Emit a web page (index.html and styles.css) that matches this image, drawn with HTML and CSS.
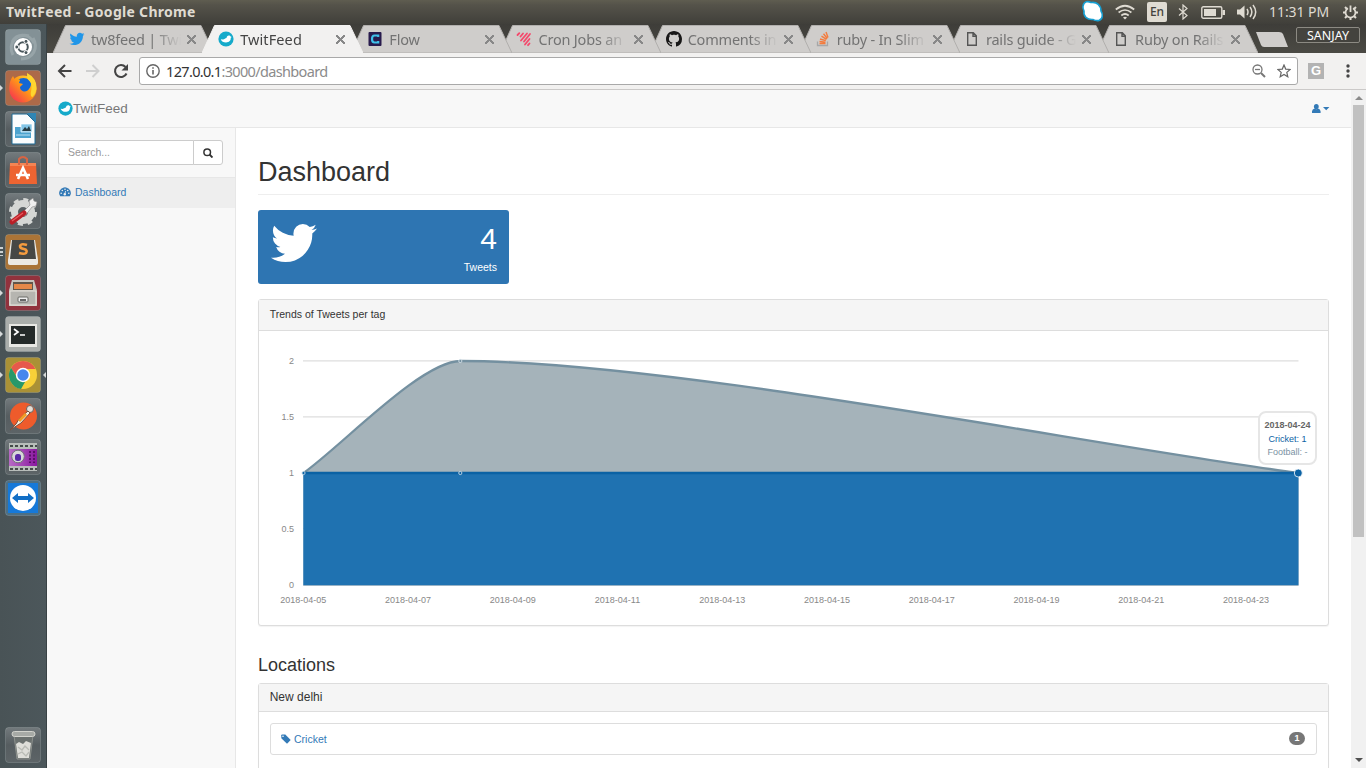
FILE: index.html
```html
<!DOCTYPE html>
<html lang="en">
<head>
<meta charset="utf-8">
<title>TwitFeed</title>
<link rel="stylesheet" href="styles.css">
</head>
<body>
<svg class="defs" width="0" height="0">
  <defs>
    <linearGradient id="tile" x2="0" y2="1"><stop stop-color="#737a7d"/><stop offset=".5" stop-color="#565d60"/><stop offset="1" stop-color="#5d6467"/></linearGradient>
    <linearGradient id="fire" x1="1" y1="0" x2="0" y2="1"><stop stop-color="#ffe83b"/><stop offset=".45" stop-color="#ff9a16"/><stop offset="1" stop-color="#f5205b"/></linearGradient>
    <linearGradient id="purple"><stop stop-color="#b76bc4"/><stop offset="1" stop-color="#8a18a0"/></linearGradient>
    <path id="bird" d="M1684 408q-67 98-162 167 1 14 1 42 0 130-38 259.5t-115.5 248.5-184.5 210.5-258 146-323 54.5q-271 0-496-145 35 4 78 4 225 0 401-138-105-2-188-64.5t-114-159.5q33 5 61 5 43 0 85-11-112-23-185.5-111.5t-73.5-205.5v-4q68 38 146 41-66-44-105-115t-39-154q0-88 44-163 121 149 294.5 238.5t371.5 99.5q-8-38-8-74 0-134 94.5-228.5t228.5-94.5q140 0 236 102 109-21 205-78-37 115-142 178 93-10 186-50z"/>
    <g id="brand"><circle cx="8" cy="8" r="7.600" fill="#16aaca"/><path d="M2.800 8.200l2.200.2c1.500-.2 2.200-1.400 3.500-1.500.2-1.500 1-2.400 2.300-2.400 1 0 1.500.5 1.800 1.100l1.100.3-1 .9c.3 2.700-1.600 4.700-4.700 4.700-2.500 0-4.500-1.200-5.200-3.300z" fill="#fff"/></g>
    <g id="doc"><path d="M1.700.7h5.600l3 3.200v9.400H1.700zM7 .7v3.500h3.300" fill="none" stroke="#555" stroke-width="1.400"/></g>
    <path id="edge" d="M0 28L12.500.5H148L161 28z"/>
  </defs>
</svg>

<header class="panel-bar">
  <div class="window-title">TwitFeed - Google Chrome</div>
  <div class="indicators">
    <svg class="skype" width="24" height="24" viewBox="0 0 24 24"><path d="M2 6C3 1 7 1 10 2.500c6-1 10 3 10 8.500 2 3 2 8-2 9.500-3 .6-4 0-6-1C6 20 2 16 3 11 2 9 1.500 8 2 6z" fill="#fff" stroke="#179fd2" stroke-width="1.600"/></svg>
    <svg class="wifi" width="20" height="16" viewBox="0 0 20 16" fill="none" stroke="#dfdbd2" stroke-width="1.700"><path d="M.8 5.500Q10-2 19.200 5.500M3.600 8.500q6.400-5 12.800 0M6.300 11.500q3.700-3 7.400 0"/><path d="M8 13.500q2-1.500 4 0l-2 2z" fill="#dfdbd2" stroke="none"/></svg>
    <span class="lang">En</span>
    <svg class="bt" width="10" height="16" viewBox="0 0 10 16" fill="none" stroke="#dfdbd2" stroke-width="1.200"><path d="M1 4.500l8 7L5 15V1l4 3.500-8 7"/></svg>
    <svg class="battery" width="24" height="13" viewBox="0 0 24 13"><rect x=".8" y=".8" width="20" height="11.400" rx="1.500" fill="none" stroke="#dfdbd2" stroke-width="1.400"/><path d="M3 3h12v7H3zM21.500 4H24v5h-2.500z" fill="#dfdbd2"/></svg>
    <svg class="sound" width="20" height="16" viewBox="0 0 20 16"><path d="M0 5.500h3L7.500 1.500v13L3 10.500H0z" fill="#dfdbd2"/><path d="M10 5q2 3 0 6M13 3q3.700 5 0 10M16 1q5.400 7 0 14" fill="none" stroke="#dfdbd2" stroke-width="1.500"/></svg>
    <span class="clock">11:31 PM</span>
    <svg class="gear" width="17" height="17" viewBox="0 0 17 17" fill="none" stroke="#dfdbd2"><path d="M6 4.200a5 5 0 1 0 5 0M8.500 1.500V8" stroke-width="1.800"/><path d="M8.500 13v3M1 8.500h3M13 8.500h3M3 3l2 2M14 3l-2 2M3 14l2-2M14 14l-2-2" stroke-width="2"/></svg>
  </div>
</header>

<div class="desktop">
  <nav class="launcher">
    <div class="app"><svg viewBox="0 0 36 36"><rect class="tile" x=".5" y=".5" width="35" height="35" rx="3" fill="#839196"/><path d="M8 26C2 14 12 4 24 7M28 9c6 10 0 21-12 21M7 13C12 4 24 4 29 14" fill="none" stroke="#97a4a8" stroke-width="3"/><circle cx="18" cy="18" r="9" fill="#fff"/><circle cx="18" cy="18" r="4.800" fill="none" stroke="#49565b" stroke-width="2"/><g fill="#49565b" stroke="#fff"><circle cx="11.800" cy="18" r="2"/><circle cx="21" cy="12.400" r="2"/><circle cx="21" cy="23.600" r="2"/></g></svg></div>
    <div class="app"><i class="run"></i><svg viewBox="0 0 36 36"><rect class="tile" x=".5" y=".5" width="35" height="35" rx="3" fill="#ad6a49"/><circle cx="18" cy="19" r="13.500" fill="url(#fire)"/><circle cx="18.500" cy="16" r="8" fill="#1467d4"/><path d="M4.500 20C4 12 6 9 8 6l2 4c2-1 4-1 5 0l-1 3 4 1-3 3c0 5 7 6 9 2 4-5 2-10-1-14 6 2 9 8 8 15-2 8-7 12-13 12C10 32 5 27 4.500 20z" fill="url(#fire)"/><path d="M22 3q10 5 9.500 16-1 5-4 8-3 0-1-8 1-6-3-9-2-3-1.500-7z" fill="#ffd52f"/></svg></div>
    <div class="app"><svg viewBox="0 0 36 36"><rect class="tile" x=".5" y=".5" width="35" height="35" rx="3" fill="url(#tile)"/><path d="M7 3h15l8 8v22H7z" fill="#fafcfd" stroke="#1c6a95"/><path d="M22 2h9v10z" fill="#2f86b5"/><path d="M10 16h16v11H10z" fill="#4ca3cf"/><path d="M16 13h11v8H16z" fill="#82c5e7" stroke="#fff" stroke-width=".7"/><path d="M17 20l3-4 2 2 2-3 2 5z" fill="#263b43"/><path d="M11 24h14" stroke="#b9e0f3"/></svg></div>
    <div class="app"><svg viewBox="0 0 36 36"><rect class="tile" x=".5" y=".5" width="35" height="35" rx="3" fill="url(#tile)"/><path d="M5 11h26l1 21H4z" fill="#ed6432"/><path d="M5 11h26v3H5z" fill="#f58453"/><path d="M14 13V7q4-4 8 0v6" fill="none" stroke="#d86443" stroke-width="2"/><path d="M13 27l5-11 5 11M11 23h14" fill="none" stroke="#fff" stroke-width="2.600"/></svg></div>
    <div class="app"><svg viewBox="0 0 36 36"><rect class="tile" x=".5" y=".5" width="35" height="35" rx="3" fill="url(#tile)"/><circle cx="18" cy="19" r="8.500" fill="none" stroke="#d5d7d5" stroke-width="7"/><circle cx="18" cy="19" r="12.500" fill="none" stroke="#d5d7d5" stroke-width="3" stroke-dasharray="5 4.800"/><path d="M17 20l8-8-1-4 4-3 1 3 3 1-1 4-4 1-7 9z" fill="#eee" stroke="#888" stroke-width=".6"/><path d="M7 29l12-9" stroke="#b91f27" stroke-width="5" stroke-linecap="round"/><path d="M7 28l11-8" stroke="#e9585c" stroke-width="1.300"/></svg></div>
    <div class="app"><i class="run triple"></i><svg viewBox="0 0 36 36"><rect class="tile" x=".5" y=".5" width="35" height="35" rx="3" fill="#aa7437"/><path d="M3 26L6 6h24l3 20v3q0 2-2 2H5q-2 0-2-2z" fill="#ebe9e4"/><path d="M7 6h22l2 19H5z" fill="#464745"/><path d="M22 11q-6-2-7 1 0 2.500 4 3 4 1 2 4-2 1.500-7 0" fill="none" stroke="#f49b3f" stroke-width="2.600"/></svg></div>
    <div class="app"><i class="run"></i><svg viewBox="0 0 36 36"><rect class="tile" x=".5" y=".5" width="35" height="35" rx="3" fill="#91323d"/><path d="M7 5h22l3 10v16H4V15z" fill="#c6c3bc"/><path d="M8 7h20v8H8z" fill="#62564a"/><path d="M9 9h18v5H9z" fill="#e58848"/><path d="M5 16h26v14H5z" fill="#b6b5b0" stroke="#e6e3dc"/><rect x="13" y="22" width="10" height="5" rx="1" fill="#eee" stroke="#6a6a66"/><path d="M15 25h6" stroke="#666" stroke-width="2"/></svg></div>
    <div class="app"><i class="run"></i><svg viewBox="0 0 36 36"><rect class="tile" x=".5" y=".5" width="35" height="35" rx="3" fill="#aaaeab"/><path d="M4 8h28v23H4z" fill="#e8e8e4"/><path d="M6 10h24v18H6z" fill="#242a29"/><path d="M9 13l4 3-4 3M15 19h5" fill="none" stroke="#fff" stroke-width="1.700"/></svg></div>
    <div class="app"><i class="run"></i><i class="focus"></i><svg viewBox="0 0 36 36"><rect class="tile" x=".5" y=".5" width="35" height="35" rx="3" fill="#aa9136"/><circle cx="18" cy="18" r="14" fill="#f8d038"/><path d="M18 4a14 14 0 0 1 12.400 8H18l-5.500 8L6 11A14 14 0 0 1 18 4z" fill="#e6594c"/><path d="M6 10.800l8 12.200 6 2-4 7A14 14 0 0 1 6 10.800z" fill="#27986a"/><circle cx="18" cy="18" r="7.200" fill="#fff"/><circle cx="18" cy="18" r="5.700" fill="#4787ed"/></svg></div>
    <div class="app"><svg viewBox="0 0 36 36"><rect class="tile" x=".5" y=".5" width="35" height="35" rx="3" fill="url(#tile)"/><circle cx="18.500" cy="18" r="13.500" fill="#ee5b2b"/><circle cx="25" cy="11" r="3.500" fill="#e5ded6" stroke="#6a625f"/><path d="M23 13L14 21l-3 5-6 6 11-7 9-10z" fill="#f5eddf" stroke="#79503f"/><path d="M21 16l-7 7" stroke="#f49b24" stroke-width="3"/></svg></div>
    <div class="app"><svg viewBox="0 0 36 36"><rect class="tile" x=".5" y=".5" width="35" height="35" rx="3" fill="url(#tile)"/><path d="M4 4h28v28H4z" fill="#b8bdba"/><path d="M4 10h28v17H4z" fill="url(#purple)"/><path d="M5 7h27M5 30h27" stroke="#454b49" stroke-width="2" stroke-dasharray="3 2"/><path d="M25 12v12M29 12v12" stroke="#5a0e68" stroke-width="2" stroke-dasharray="2 1.500"/><circle cx="13" cy="17.500" r="6.300" fill="#d7d6d9" stroke="#717379"/><rect x="10" y="15" width="6" height="7" rx="2.500" fill="#5928a6"/></svg></div>
    <div class="app"><svg viewBox="0 0 36 36"><rect class="tile" x=".5" y=".5" width="35" height="35" rx="3" fill="#4d6f84"/><path d="M3 3h30v30H3z" fill="#1679d9"/><circle cx="18" cy="18" r="13" fill="#fff"/><path d="M7 18l6-5v3h10v-3l6 5-6 5v-3H13v3z" fill="#126fc6"/></svg></div>
    <div class="app trash"><svg viewBox="0 0 36 36"><rect class="tile" x=".5" y=".5" width="35" height="35" rx="3" fill="url(#tile)"/><path d="M9 8h19l-3 24H12z" fill="#6b716f" stroke="#8d918d"/><path d="M11 17l3-2 4 2 3-3 5 2-2 15H13z" fill="#deded9"/><path d="M13 20l4 3 3-4 4 4M13 27l4-2 4 4 3-4" fill="none" stroke="#b9bbb5" stroke-width="1.300"/><rect x="7" y="4.500" width="23" height="5" rx="2.500" fill="#a7aaa6" stroke="#d2d3cd"/></svg></div>
  </nav>

  <main class="browser">
    <div class="tabstrip">
      <div class="tab"><svg class="shape" width="161" height="28"><use href="#edge"/></svg><svg class="fav" viewBox="60 180 1680 1440"><use href="#bird" fill="#2196e8"/></svg><span class="label">tw8feed | Twi</span><b class="close"></b></div>
      <div class="tab active"><svg class="shape" width="161" height="28"><use href="#edge"/></svg><svg class="fav" viewBox="0 0 16 16"><use href="#brand"/></svg><span class="label">TwitFeed</span><b class="close"></b></div>
      <div class="tab"><svg class="shape" width="161" height="28"><use href="#edge"/></svg><svg class="fav" viewBox="0 0 16 16"><rect x="1.500" y="1" width="13" height="14" rx="1" fill="#281b4d"/><path d="M11.200 6V4.500H7.500Q5 4.500 5 8t2.500 3.500h3.700V10" fill="none" stroke="#3fc1e9" stroke-width="2.200"/></svg><span class="label">Flow</span><b class="close"></b></div>
      <div class="tab"><svg class="shape" width="161" height="28"><use href="#edge"/></svg><svg class="fav" viewBox="0 0 16 16"><g stroke="#f4486b" stroke-width="1.800" stroke-linecap="round"><path d="M1.500 4l1.800-1.800M4.500 5.500L7 2.500M5 9.500l6-7M8 10.500l6-7.500M9 13.500l4.500-5.500M12 14.200l1.500-1.700"/></g></svg><span class="label">Cron Jobs an</span><b class="close"></b></div>
      <div class="tab"><svg class="shape" width="161" height="28"><use href="#edge"/></svg><svg class="fav" viewBox="0 0 16 16"><path fill="#181717" d="M8 0C3.580 0 0 3.580 0 8c0 3.540 2.290 6.530 5.470 7.590.4.070.55-.17.55-.38 0-.19-.01-.82-.01-1.490-2.010.37-2.530-.49-2.690-.94-.09-.23-.48-.94-.82-1.130-.28-.15-.68-.52-.01-.53.63-.01 1.080.58 1.230.82.72 1.210 1.870.87 2.330.66.07-.52.28-.87.51-1.070-1.780-.2-3.640-.89-3.640-3.950 0-.87.31-1.590.82-2.150-.08-.2-.36-1.020.08-2.120 0 0 .67-.21 2.200.82.64-.18 1.320-.27 2-.27s1.360.09 2 .27c1.530-1.040 2.200-.82 2.200-.82.44 1.100.16 1.920.08 2.120.51.56.82 1.270.82 2.150 0 3.070-1.870 3.750-3.650 3.950.29.25.54.73.54 1.480 0 1.070-.01 1.930-.01 2.200 0 .21.15.46.55.38A8 8 0 0 0 16 8c0-4.420-3.580-8-8-8z"/></svg><span class="label">Comments in</span><b class="close"></b></div>
      <div class="tab"><svg class="shape" width="161" height="28"><use href="#edge"/></svg><svg class="fav" viewBox="0 0 16 16" fill="none"><path d="M2.500 10.500v4h10v-4" stroke="#a6a7a8" stroke-width="1.300"/><path d="M4.500 12.500h6M4.500 10.500l6 .7M5 8l5.800 1.700M6.500 5.200l5 3.200M8.500 2.800l3.800 4.700M11 1l2 5.500" stroke="#f47b3d" stroke-width="1.400"/></svg><span class="label">ruby - In Slim</span><b class="close"></b></div>
      <div class="tab"><svg class="shape" width="161" height="28"><use href="#edge"/></svg><svg class="fav" viewBox="-2 -1 16 16"><use href="#doc"/></svg><span class="label">rails guide - G</span><b class="close"></b></div>
      <div class="tab"><svg class="shape" width="161" height="28"><use href="#edge"/></svg><svg class="fav" viewBox="-2 -1 16 16"><use href="#doc"/></svg><span class="label">Ruby on Rails</span><b class="close"></b></div>
      <svg class="newtab" width="33" height="15" viewBox="0 0 33 15"><path d="M0 0h23q3 0 4 2l5 13H8q-2 0-3-2z" fill="#cfcdcb"/></svg>
      <span class="profile">SANJAY</span>
    </div>

    <div class="toolbar">
      <svg class="back" width="16" height="14" viewBox="0 0 16 14" fill="none" stroke="#444" stroke-width="2"><path d="M14.500 7H2M8 1L2 7l6 6"/></svg>
      <svg class="fwd" width="16" height="14" viewBox="0 0 16 14" fill="none" stroke="#cfcfcf" stroke-width="2"><path d="M1 7h12.500M7.500 1l6 6-6 6"/></svg>
      <svg class="reload" width="16" height="16" viewBox="0 0 16 16"><path d="M13.500 10.500A6 6 0 1 1 12.500 4" fill="none" stroke="#444" stroke-width="2.100"/><path d="M15 1v6.500H8.500z" fill="#444"/></svg>
      <div class="omnibox">
        <svg width="14" height="14" viewBox="0 0 14 14"><circle cx="7" cy="7" r="6.200" fill="none" stroke="#666" stroke-width="1.400"/><path d="M6.200 6h1.600v4.500H6.200zM6.200 3.300h1.600v1.500H6.200z" fill="#666"/></svg>
        <span class="url"><em>127.0.0.1</em>:3000/dashboard</span>
        <svg width="14" height="14" viewBox="0 0 14 14" fill="none" stroke="#777" stroke-width="1.300"><circle cx="5.500" cy="5.500" r="4.500"/><path d="M3 5.500h5"/><path d="M9 9l4 4" stroke-width="2"/></svg>
        <svg class="star" width="14" height="14" viewBox="0 0 14 14"><path d="M7 1l1.700 4.100 4.500.4-3.400 2.900 1 4.400L7 10.500l-3.800 2.300 1-4.400L.8 5.500l4.500-.4z" fill="none" stroke="#666" stroke-width="1.200"/></svg>
      </div>
      <span class="ext">G</span>
      <svg class="menu" width="4" height="14" viewBox="0 0 4 14" fill="#444"><circle cx="2" cy="2" r="1.700"/><circle cx="2" cy="7" r="1.700"/><circle cx="2" cy="12" r="1.700"/></svg>
    </div>

    <div class="viewport">
      <div class="page">
        <div class="navbar">
          <svg width="15" height="15" viewBox="0 0 16 16"><use href="#brand"/></svg>
          <span class="brand">TwitFeed</span>
          <svg class="user" width="18" height="9" viewBox="0 0 18 9" fill="#337ab7"><ellipse cx="4.300" cy="2.600" rx="2.400" ry="2.600"/><path d="M0 9V7.300Q.3 5 2.600 4.600q1.700 1.200 3.400 0Q8.300 5 8.600 7.300V9zM11 3h6.400l-3.200 3.300z"/></svg>
        </div>
        <div class="columns">
          <aside class="sidebar">
            <div class="search">
              <span class="field">Search...</span>
              <span class="go"><svg width="10" height="10" viewBox="0 0 10 10" fill="none" stroke="#333"><circle cx="4.200" cy="4.200" r="3.300" stroke-width="1.500"/><path d="M6.500 6.500l3 3" stroke-width="1.900"/></svg></span>
            </div>
            <a class="item"><svg width="12" height="10" viewBox="0 0 12 10"><path d="M1.200 9.200A5.700 5.700 0 1 1 10.800 9.200z" fill="#337ab7"/><g fill="#eee"><circle cx="2.200" cy="6.200" r=".8"/><circle cx="3.300" cy="3.500" r=".8"/><circle cx="6" cy="2.300" r=".8"/><circle cx="8.700" cy="3.500" r=".8"/><circle cx="9.800" cy="6.200" r=".8"/><circle cx="5.800" cy="7.300" r="1.200"/></g><path d="M5.800 7.300l.8-3.300" stroke="#eee" stroke-width=".8"/></svg>Dashboard</a>
          </aside>
          <section class="content">
            <h1>Dashboard</h1>
            <div class="stat">
              <svg width="46" height="38" viewBox="108 256 1576 1280" preserveAspectRatio="none"><use href="#bird" fill="#fff"/></svg>
              <div class="figures"><div class="huge">4</div><div>Tweets</div></div>
            </div>
            <div class="panel trends">
              <div class="heading">Trends of Tweets per tag</div>
              <div class="chart">
                <svg width="1069" height="295" viewBox="259 331 1069 295">
                  <path d="M303 360.800h995.500M303 416.800h995.500M303 472.500h995.500M303 528.500h995.500M303 585.500h995.500" stroke="#dedede" stroke-width="1.200" fill="none"/>
                  <path d="M303.500 473C342.800 445 421.300 361 460.600 361C670 361 1089 445 1298.500 473V585.500H303.500z" fill="#a5b3ba"/>
                  <path d="M303.500 473C342.800 445 421.300 361 460.600 361C670 361 1089 445 1298.500 473" fill="none" stroke="#7490a0" stroke-width="2.300"/>
                  <path d="M303.300 473H1298.500V585.300H303.300z" fill="#1f72b1"/>
                  <path d="M303.500 473H1298.500" stroke="#0b62a4" stroke-width="2.300"/>
                  <g fill="#7490a0" stroke="#dbe6ed" stroke-width=".8"><circle cx="460.300" cy="361" r="1.600"/><circle cx="460.300" cy="473" r="1.600" fill="#0b62a4"/><circle cx="303.500" cy="473" r="1.600" fill="#0b62a4"/></g>
                  <circle cx="1298.300" cy="473" r="4" fill="#0b62a4" stroke="#fff" stroke-width=".8"/>
                  <g class="axis y"><text x="294" y="364">2</text><text x="294" y="420">1.5</text><text x="294" y="476">1</text><text x="294" y="532">0.5</text><text x="294" y="588">0</text></g>
                  <g class="axis x"><text x="303.300" y="603">2018-04-05</text><text x="408" y="603">2018-04-07</text><text x="512.700" y="603">2018-04-09</text><text x="617.500" y="603">2018-04-11</text><text x="722.200" y="603">2018-04-13</text><text x="827" y="603">2018-04-15</text><text x="931.700" y="603">2018-04-17</text><text x="1036.400" y="603">2018-04-19</text><text x="1141.200" y="603">2018-04-21</text><text x="1245.900" y="603">2018-04-23</text></g>
                </svg>
                <div class="tip"><strong>2018-04-24</strong><span class="cricket">Cricket: 1</span><span class="football">Football: -</span></div>
              </div>
            </div>
            <h2>Locations</h2>
            <div class="panel place">
              <div class="heading">New delhi</div>
              <div class="list">
                <div class="row"><svg width="10" height="10" viewBox="0 0 10 10"><path d="M.3 1.300q0-.8.8-.8h3.200L9.700 6 6 9.700.3 4.300z" fill="#337ab7"/><circle cx="2" cy="2.200" r=".8" fill="#fff"/></svg><a>Cricket</a><span class="badge">1</span></div>
              </div>
            </div>
          </section>
        </div>
      </div>
      <div class="scrollbar"><i class="up"></i><div class="thumb"></div><i class="down"></i></div>
    </div>
  </main>
</div>
</body>
</html>
```
FILE: styles.css
```css
* { box-sizing: border-box; }
html, body { margin: 0; height: 768px; overflow: hidden; }
body { display: flex; flex-direction: column; font-family: "Liberation Sans", Arial, sans-serif; background: #3c3b37; }
svg { display: block; flex: none; }
.defs { position: absolute; }

/* top system bar */
.panel-bar { height: 24px; flex: none; display: flex; align-items: center; justify-content: space-between; padding: 0 7px 0 6px; background: linear-gradient(#5f5d50, #55534a 20%, #403f3a); color: #dfdbd2; font-family: "Noto Sans", sans-serif; }
.window-title { font-size: 14px; font-weight: 700; line-height: 22px; white-space: nowrap; letter-spacing: .3px; }
.indicators { display: flex; align-items: center; height: 24px; }
.skype { margin-right: 10px; }
.wifi { margin-right: 12px; }
.lang { width: 20px; height: 20px; border-radius: 2px; background: #dfdbd2; color: #44433e; font-size: 12px; line-height: 20px; font-weight: 500; text-align: center; margin-right: 11px; }
.bt { margin-right: 13px; }
.battery { margin-right: 12px; }
.sound { margin-right: 12px; }
.clock { width: 61px; font-size: 14px; line-height: 22px; white-space: nowrap; letter-spacing: -.05px; margin-right: 12px; }

/* launcher */
.desktop { display: flex; flex: 1; min-height: 0; }
.launcher { width: 47px; flex: none; display: flex; flex-direction: column; gap: 5px; padding: 5px 6px 5px 5px; background: linear-gradient(90deg, #495356, #4c575b); border-right: 1px solid #394245; }
.app { position: relative; width: 36px; height: 36px; flex: none; }
.app svg { width: 36px; height: 36px; }
.tile { stroke: rgba(210, 220, 220, .2); }
.trash { margin-top: auto; }
.run, .focus { position: absolute; top: 15px; width: 0; height: 0; border: 3px solid transparent; }
.run { left: -5px; border-left-color: #d6dada; border-right: 0; }
.focus { right: -5px; border-right-color: #d6dada; border-left: 0; }
.triple { top: 13px; left: -5px; width: 3px; height: 9px; border: 0; background: repeating-linear-gradient(#ccd1d2 0 2px, transparent 2px 4px); }

/* browser frame */
.browser { flex: 1; min-width: 0; display: flex; flex-direction: column; }
.tabstrip { height: 29px; flex: none; display: flex; align-items: flex-start; padding: 1px 6px 0; background: linear-gradient(#3e3d39, #4b4a44); font-family: "Noto Sans", sans-serif; }
.tab { position: relative; width: 161px; height: 28px; margin-right: -11.850px; flex: none; display: flex; align-items: center; padding: 0 18px 0 16px; z-index: 1; }
.tab:nth-child(1) { z-index: 9; }
.tab:nth-child(3) { z-index: 7; }
.tab:nth-child(4) { z-index: 6; }
.tab:nth-child(5) { z-index: 5; }
.tab:nth-child(6) { z-index: 4; }
.tab:nth-child(7) { z-index: 3; }
.tab:nth-child(8) { z-index: 2; }
.tab.active { z-index: 10; }
.shape { position: absolute; left: 0; top: 0; fill: #cfcdcb; stroke: #b1afad; }
.active .shape { fill: #f2f1f0; stroke: #f2f1f0; }
.fav { position: relative; width: 16px; height: 16px; margin-right: 6px; }
.label { position: relative; width: 91px; font-size: 14.5px; line-height: 27px; white-space: nowrap; overflow: hidden; color: #737373; letter-spacing: -.2px; -webkit-mask-image: linear-gradient(90deg, #000 62px, transparent 90px); mask-image: linear-gradient(90deg, #000 62px, transparent 90px); }
.active .label { color: #444; letter-spacing: .1px; }
.close { position: relative; width: 9px; height: 9px; margin-left: 5px; background: linear-gradient(45deg, transparent 44%, #888 44% 56%, transparent 56%), linear-gradient(-45deg, transparent 44%, #888 44% 56%, transparent 56%); }
.newtab { margin: 7px 0 0 10px; }
.profile { margin: 2px 0 0 auto; width: 64px; height: 16px; border: 1px solid #8c8a83; border-radius: 2px; background: #44433e; color: #fff; font-size: 12.500px; line-height: 15px; text-align: center; }
.toolbar { height: 37px; flex: none; display: flex; align-items: center; background: #f2f1f0; border-bottom: 1px solid #cbc9c8; padding: 0 16px 0 10px; }
.back { margin-right: 12px; }
.fwd { margin-right: 12px; }
.reload { margin-right: 10px; }
.omnibox { width: 1159px; height: 28px; display: flex; align-items: center; padding: 0 6px; background: #fff; border: 1px solid #a9a9a9; border-radius: 3px; }
.url { flex: 1; margin-left: 6px; font: 14.500px/26px "Noto Sans", sans-serif; letter-spacing: -.66px; color: #8b8b8b; margin-top: -1px; }
.url em { font-style: normal; color: #333; }
.star { margin-left: 11px; }
.ext { width: 16px; height: 16px; margin: 0 0 0 10px; background: #b3b3b3; color: #fff; font: bold 13px/16px "Liberation Sans", sans-serif; text-align: center; }
.menu { margin-left: auto; }

/* page */
.viewport { flex: 1; min-height: 0; display: flex; background: #fff; }
.page { flex: 1; min-width: 0; display: flex; flex-direction: column; background: #f8f8f8; }
.navbar { height: 38px; flex: none; display: flex; align-items: center; padding: 0 21px 0 11px; border-bottom: 1px solid #e7e7e7; }
.brand { font-size: 13.500px; color: #777; margin-right: auto; }
.columns { flex: 1; min-height: 0; display: flex; }
.sidebar { width: 188px; flex: none; font-size: 10.500px; }
.search { display: flex; height: 50px; padding: 12px 12px 0 11px; border-bottom: 1px solid #e7e7e7; }
.field { flex: 1; height: 25px; padding-left: 9px; line-height: 23px; background: #fff; border: 1px solid #ccc; border-radius: 3px 0 0 3px; color: #999; }
.go { width: 30px; height: 25px; margin-left: -1px; display: flex; align-items: center; justify-content: center; border: 1px solid #ccc; border-radius: 0 3px 3px 0; background: #fff; }
.item { height: 30px; display: flex; align-items: center; gap: 4px; padding: 0 0 2px 12px; background: #eee; color: #337ab7; }
.content { flex: 1; min-width: 0; background: #fff; border-left: 1px solid #e7e7e7; padding: 0 22px; color: #333; overflow: hidden; }
h1 { margin: 28px 0 15px; height: 39px; font-size: 27px; line-height: 32px; font-weight: 500; border-bottom: 1px solid #eee; }
.stat { width: 251px; height: 74px; display: flex; justify-content: space-between; padding: 14px 12px 0 13px; border-radius: 3px; background: #2e75b2; color: #fff; font-size: 10.500px; }
.figures { text-align: right; line-height: 15px; }
.huge { font-size: 30px; line-height: 30px; margin-bottom: 6px; }
.panel { border: 1px solid #ddd; border-radius: 3px; background: #fff; box-shadow: 0 1px 1px rgba(0, 0, 0, .05); }
.trends { margin-top: 15px; height: 327px; }
.heading { height: 31px; padding-left: 10.700px; font-size: 10.500px; line-height: 29px; background: #f5f5f5; border-bottom: 1px solid #ddd; }
.chart { position: relative; height: 294px; }
.axis { font: 9px "Liberation Sans", sans-serif; fill: #888; }
.y { text-anchor: end; }
.x { text-anchor: middle; }
.tip { position: absolute; left: 999px; top: 80px; width: 59px; height: 54px; padding-top: 6px; display: flex; flex-direction: column; align-items: center; border: 2px solid #e6e6e6; border-radius: 8px; background: rgba(255, 255, 255, .95); font-size: 9px; line-height: 13px; white-space: nowrap; color: #666; }
.tip strong { line-height: 12px; margin-bottom: 2px; }
.cricket { color: #0b62a4; }
.football { color: #7a92a3; }
h2 { margin: 28px 0 7px; font-size: 18px; line-height: 22px; font-weight: 500; }
.place { height: 120px; }
.place .heading { height: 28px; font-size: 12px; line-height: 26px; }
.list { padding: 11px; }
.row { display: flex; align-items: center; height: 32px; padding: 0 11px 0 10px; border: 1px solid #ddd; border-radius: 3px; font-size: 10.500px; color: #337ab7; }
.row a { margin-left: 3px; }
.badge { margin: -1px 0 0 auto; width: 16px; height: 13px; border-radius: 7px; background: #777; color: #fff; font-size: 9px; font-weight: 700; line-height: 13px; text-align: center; }
.scrollbar { width: 15px; flex: none; display: flex; flex-direction: column; align-items: center; background: #f1f1f1; }
.up, .down { width: 0; height: 0; border: 4px solid transparent; }
.up { margin-top: 2px; border-bottom-color: #8b8b8b; }
.thumb { width: 11px; height: 432px; margin-top: 5px; background: #c1c1c1; }
.down { margin: auto 0 2px; border-top-color: #505050; }
```
